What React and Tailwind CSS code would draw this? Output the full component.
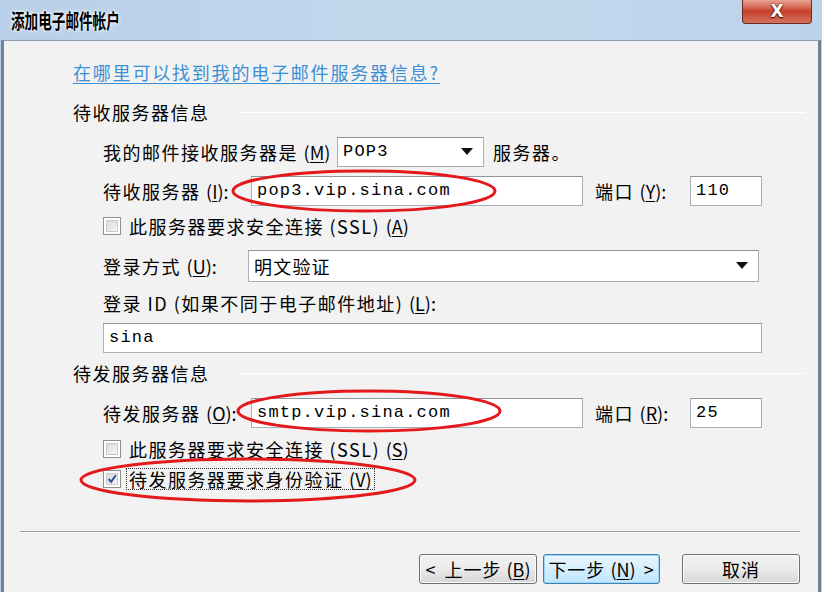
import React from "react";

const cjk = { fontFamily: '"Noto Sans CJK SC", "Noto Sans", sans-serif' };
const mono = { fontFamily: '"Liberation Mono", "Noto Sans CJK SC", monospace' };

// access key like (M) with underlined letter
const Key = ({ k }) => (
    <span className="tracking-normal">
        (<span className="underline underline-offset-2">{k}</span>)
    </span>
);

const Box = ({ className = "", children }) => (
    <div
        className={`h-[30px] bg-white border border-[#a9afb6] border-t-[#8e959c] flex items-center pl-[5px] text-[17px] tracking-[1.2px] text-black ${className}`}
        style={mono}
    >
        {children}
    </div>
);

const Arrow = () => (
    <svg width="12" height="8" viewBox="0 0 12 8" className="shrink-0">
        <path d="M0 0 L12 0 L6 7 Z" fill="#111" />
    </svg>
);

const CheckBox = ({ checked }) => (
    <div className="w-[18px] h-[18px] border border-[#8f8f8f] bg-white p-[2px] shrink-0">
        <div className="w-full h-full bg-gradient-to-br from-[#dcdcdc] to-[#f4f4f4] border border-[#c9c9c9] flex items-center justify-center">
            {checked && (
                <svg width="12" height="12" viewBox="0 0 12 12">
                    <path d="M2 6 L5 9.5 L10.5 1.5" stroke="#2b4f9a" strokeWidth="2.4" fill="none" />
                </svg>
            )}
        </div>
    </div>
);

const Heading = ({ text }) => (
    <div className="h-[22px] flex items-center pl-[69px] pr-[13px]">
        <span className="text-[18px] tracking-[1.5px] text-black leading-none">{text}</span>
        <div className="flex-1 ml-[30px] h-[1px] bg-[#bfc4c9] border-b border-white" />
    </div>
);

const Btn = ({ children, focus, className = "" }) => (
    <div
        className={`h-[30px] rounded-[3px] border flex items-center justify-center gap-[8px] text-[18px] text-black ${
            focus
                ? "border-[#3c7fb1] bg-gradient-to-b from-[#eaf6fd] to-[#bee6fd] shadow-[inset_0_0_0_1px_#9fd6f5]"
                : "border-[#707070] bg-gradient-to-b from-[#f2f2f2] via-[#ebebeb] to-[#d6d6d6] shadow-[inset_0_0_0_1px_#fcfcfc]"
        } ${className}`}
    >
        {children}
    </div>
);

export default function App() {
    return (
        <div
            className="relative w-[822px] h-[592px] overflow-hidden flex flex-col bg-gradient-to-r from-[#b7cfe8] via-[#c4d8ed] to-[#bed3ea] pl-[1px] pr-[1px]"
            style={cjk}
        >
            {/* title bar */}
            <div className="h-[40px] shrink-0 flex items-start justify-between">
                <div className="pl-[10px] pt-[6px] whitespace-nowrap">
                    <span className="inline-block origin-left scale-x-[0.68] text-[20px] font-bold text-black [text-shadow:0_0_6px_#ffffff,0_0_3px_#ffffff]">
                        添加电子邮件帐户
                    </span>
                </div>
                <div className="mr-[9px] w-[70px] h-[24px] rounded-b-[4px] border border-t-0 border-[#6b2a22] bg-gradient-to-b from-[#e8a293] via-[#c8402c] to-[#d4705c] flex items-center justify-center">
                    <span className="text-white font-bold text-[17px] leading-none [text-shadow:0_0_2px_#3a1010,0_1px_1px_#3a1010]" style={{ fontFamily: '"DejaVu Sans", sans-serif' }}>
                        X
                    </span>
                </div>
            </div>

            {/* content panel */}
            <div className="flex-1 flex flex-col bg-[#f2f2f2] border-t border-[#8b9cad] border-l-[3px] border-l-[#6f8296] border-r-[3px] border-r-[#6f8296] text-[18px] tracking-[1.5px] text-black">
                <div className="mt-[20px] h-[22px] flex items-center pl-[69px]">
                    <span className="text-[#3c8fd4] underline underline-offset-[3px] leading-none tracking-[1.8px]">
                        在哪里可以找到我的电子邮件服务器信息?
                    </span>
                </div>

                <div className="mt-[18px]">
                    <Heading text="待收服务器信息" />
                </div>

                <div className="mt-[14px] h-[30px] flex items-center pl-[99px]">
                    <span className="w-[234px] shrink-0">
                        我的邮件接收服务器是 <Key k="M" />
                    </span>
                    <Box className="w-[147px] justify-between pr-[10px]">
                        <span>POP3</span>
                        <Arrow />
                    </Box>
                    <span className="ml-[9px]">服务器。</span>
                </div>

                <div className="mt-[9px] h-[30px] flex items-center pl-[99px]">
                    <span className="w-[148px] shrink-0">
                        待收服务器 <Key k="I" />:
                    </span>
                    <Box className="w-[332px]">pop3.vip.sina.com</Box>
                    <span className="ml-[12px] w-[95px] shrink-0">
                        端口 <Key k="Y" />:
                    </span>
                    <Box className="w-[72px]">110</Box>
                </div>

                <div className="mt-[9px] h-[22px] flex items-center pl-[99px] gap-[8px]">
                    <CheckBox />
                    <span>
                        此服务器要求安全连接 (SSL) <Key k="A" />
                    </span>
                </div>

                <div className="mt-[13px] h-[32px] flex items-center pl-[99px]">
                    <span className="w-[145px] shrink-0">
                        登录方式 <Key k="U" />:
                    </span>
                    <Box className="w-[511px] h-[32px] justify-between pr-[10px]">
                        <span style={cjk} className="text-[18px]">明文验证</span>
                        <Arrow />
                    </Box>
                </div>

                <div className="mt-[10px] h-[22px] flex items-center pl-[99px]">
                    <span>
                        登录 ID (如果不同于电子邮件地址) <Key k="L" />:
                    </span>
                </div>

                <div className="mt-[9px] h-[30px] flex items-center pl-[99px]">
                    <Box className="w-[659px]">sina</Box>
                </div>

                <div className="mt-[9px]">
                    <Heading text="待发服务器信息" />
                </div>

                <div className="mt-[14px] h-[30px] flex items-center pl-[99px]">
                    <span className="w-[148px] shrink-0">
                        待发服务器 <Key k="O" />:
                    </span>
                    <Box className="w-[332px]">smtp.vip.sina.com</Box>
                    <span className="ml-[12px] w-[95px] shrink-0">
                        端口 <Key k="R" />:
                    </span>
                    <Box className="w-[72px]">25</Box>
                </div>

                <div className="mt-[10px] h-[22px] flex items-center pl-[99px] gap-[8px]">
                    <CheckBox />
                    <span>
                        此服务器要求安全连接 (SSL) <Key k="S" />
                    </span>
                </div>

                <div className="mt-[8px] h-[22px] flex items-center pl-[99px] gap-[6px]">
                    <CheckBox checked />
                    <span className="outline outline-1 outline-dotted outline-[#333] px-[2px] leading-[20px]">
                        待发服务器要求身份验证 <Key k="V" />
                    </span>
                </div>

                <div className="mt-[41px] ml-[16px] w-[780px] h-[2px] bg-[#a0a0a0] border-b border-white" />

                <div className="mt-[21px] h-[30px] flex items-center pl-[415px] tracking-[1px]">
                    <Btn className="w-[118px]">
                        <span>&lt;</span>
                        <span>
                            上一步 <Key k="B" />
                        </span>
                    </Btn>
                    <Btn focus className="ml-[6px] w-[117px]">
                        <span>
                            下一步 <Key k="N" />
                        </span>
                        <span>&gt;</span>
                    </Btn>
                    <Btn className="ml-[22px] w-[118px]">取消</Btn>
                </div>
            </div>

            {/* red hand-drawn ellipses over the dialog */}
            <svg className="absolute left-0 top-0 pointer-events-none" width="822" height="592" viewBox="0 0 822 592">
                <ellipse cx="364" cy="191" rx="131" ry="20" fill="none" stroke="#e3191b" strokeWidth="3" />
                <ellipse cx="369" cy="411" rx="131" ry="20" fill="none" stroke="#e3191b" strokeWidth="3" />
                <ellipse cx="248" cy="480" rx="167" ry="21" fill="none" stroke="#e3191b" strokeWidth="3" />
            </svg>
        </div>
    );
}
